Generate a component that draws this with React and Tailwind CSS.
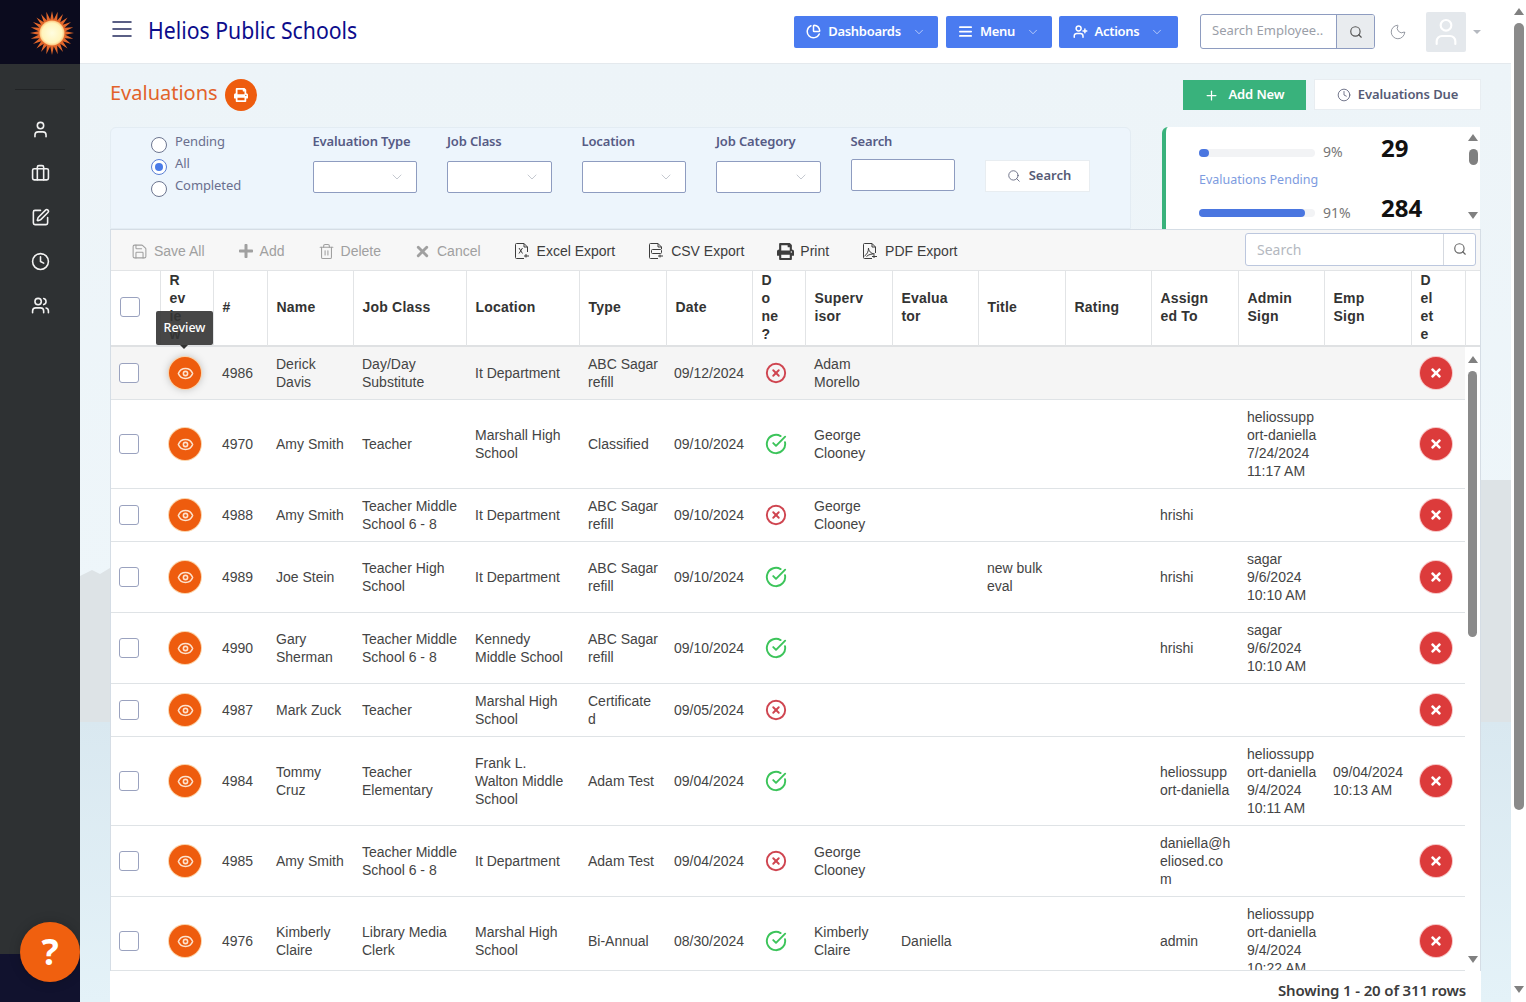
import React from 'react';
import {
  AlignJustify, Briefcase, ChartPie, ChevronDown, CircleCheckBig, CircleX, Clock, Eye, Menu, Moon, Plus,
  Save, Search, SquarePen, Trash2, User, UserPlus, Users, X,
} from 'lucide-react';
import { FaPlus, FaPrint, FaTimes } from 'react-icons/fa';

const noto = "font-['Noto_Sans',sans-serif]";

const columns = [49, 53, 54, 86, 113, 113, 87, 86, 53, 87, 86, 87, 86, 87, 86, 87, 54];

const headers = [
  [], ['R', 'ev', 'ie', 'w'], ['#'], ['Name'], ['Job Class'], ['Location'], ['Type'], ['Date'],
  ['D', 'o', 'ne', '?'], ['Superv', 'isor'], ['Evalua', 'tor'], ['Title'], ['Rating'],
  ['Assign', 'ed To'], ['Admin', 'Sign'], ['Emp', 'Sign'], ['D', 'el', 'et', 'e'],
];

const rows = [
  { id: 4986, name: 'Derick Davis', job: 'Day/Day Substitute', loc: 'It Department', type: 'ABC Sagar refill', date: '09/12/2024', done: false, sup: 'Adam Morello' },
  { id: 4970, name: 'Amy Smith', job: 'Teacher', loc: 'Marshall High School', type: 'Classified', date: '09/10/2024', done: true, sup: 'George Clooney', admin: 'heliossupport-daniella 7/24/2024 11:17 AM' },
  { id: 4988, name: 'Amy Smith', job: 'Teacher Middle School 6 - 8', loc: 'It Department', type: 'ABC Sagar refill', date: '09/10/2024', done: false, sup: 'George Clooney', assigned: 'hrishi' },
  { id: 4989, name: 'Joe Stein', job: 'Teacher High School', loc: 'It Department', type: 'ABC Sagar refill', date: '09/10/2024', done: true, title: 'new bulk eval', assigned: 'hrishi', admin: 'sagar 9/6/2024 10:10 AM' },
  { id: 4990, name: 'Gary Sherman', job: 'Teacher Middle School 6 - 8', loc: 'Kennedy Middle School', type: 'ABC Sagar refill', date: '09/10/2024', done: true, assigned: 'hrishi', admin: 'sagar 9/6/2024 10:10 AM' },
  { id: 4987, name: 'Mark Zuck', job: 'Teacher', loc: 'Marshal High School', type: 'Certificated', date: '09/05/2024', done: false },
  { id: 4984, name: 'Tommy Cruz', job: 'Teacher Elementary', loc: 'Frank L. Walton Middle School', type: 'Adam Test', date: '09/04/2024', done: true, assigned: 'heliossupport-daniella', admin: 'heliossupport-daniella 9/4/2024 10:11 AM', emp: '09/04/2024 10:13 AM' },
  { id: 4985, name: 'Amy Smith', job: 'Teacher Middle School 6 - 8', loc: 'It Department', type: 'Adam Test', date: '09/04/2024', done: false, sup: 'George Clooney', assigned: 'daniella@heliosed.com' },
  { id: 4976, name: 'Kimberly Claire', job: 'Library Media Clerk', loc: 'Marshal High School', type: 'Bi-Annual', date: '08/30/2024', done: true, sup: 'Kimberly Claire', evaluator: 'Daniella', assigned: 'admin', admin: 'heliossupport-daniella 9/4/2024 10:22 AM' },
];

// the burst in the corner of the sidebar
const sunPoints = Array.from({ length: 48 }, (_, i) => {
  const r = i % 2 === 0 ? 22 : 13.5;
  const a = (i * Math.PI) / 24;
  return `${24 + r * Math.sin(a)},${24 - r * Math.cos(a)}`;
}).join(' ');

const SunLogo = () => (
  <svg width="48" height="48" viewBox="0 0 48 48">
    <defs>
      <radialGradient id="sunCore">
        <stop offset="0" stopColor="#fffde0" />
        <stop offset="0.8" stopColor="#fff4bc" />
        <stop offset="1" stopColor="#fcc27a" />
      </radialGradient>
    </defs>
    <polygon points={sunPoints} fill="#e2672b" />
    <circle cx="24" cy="24" r="12.5" fill="url(#sunCore)" />
  </svg>
);

const ExcelIcon = () => (
  <svg width="17" height="18" viewBox="0 0 17 18" fill="none" stroke="#3d3d3d" strokeWidth="1">
    <path d="M10 16.500H2.500a1 1 0 0 1-1-1v-13a1 1 0 0 1 1-1H10l3.500 3.500V10" />
    <path d="M10 1.500V5h3.500M5 6l3.500 5.500M8.500 6 5 11.500M12 12v3.500m-2-1.500h5" />
  </svg>
);

const CsvIcon = () => (
  <svg width="17" height="18" viewBox="0 0 17 18" fill="none" stroke="#3d3d3d" strokeWidth="1">
    <path d="M10 16.500H2.500a1 1 0 0 1-1-1v-13a1 1 0 0 1 1-1H10l3.500 3.500V7" />
    <path d="M10 1.500V5h3.500M12 12.500v3m-2-1.500h5" />
    <rect x="3.500" y="7.500" width="10" height="4" rx="1" />
  </svg>
);

const PdfIcon = () => (
  <svg width="17" height="18" viewBox="0 0 17 18" fill="none" stroke="#3d3d3d" strokeWidth="1">
    <path d="M10 16.500H2.500a1 1 0 0 1-1-1v-13a1 1 0 0 1 1-1H10l3.500 3.500V11" />
    <path d="M10 1.500V5h3.500M2.500 14c2.500-1.500 4-4.500 4-8 0 3 2.500 5.500 6 6-3-.2-6 .5-8 2.500M12 13v3m-2-1.500h5" />
  </svg>
);

const TriangleUp = () => (
  <span className="block w-0 h-0 border-x-[5px] border-b-[7px] border-x-transparent border-b-[#808080]" />
);

const TriangleDown = () => (
  <span className="block w-0 h-0 border-x-[5px] border-t-[7px] border-x-transparent border-t-[#808080]" />
);

const NavButton = ({ icon: Icon, label, width, stroke = 2.4, extra = '' }) => (
  <button className={`flex items-center justify-center gap-[7px] h-8 rounded-[2px] bg-[#4a7bf0] text-white text-[13px] font-semibold tracking-[-0.3px] ${width} ${extra}`}>
    <Icon size={15} strokeWidth={stroke} />
    <span>{label}</span>
    <ChevronDown size={14} strokeWidth={1} className="ml-1" />
  </button>
);

const SelectFilter = ({ label }) => (
  <div className="w-[104.500px]">
    <div className="text-[13px] leading-[16px] font-semibold tracking-[-0.15px] text-[#565b85]">{label}</div>
    <div className="mt-3 h-8 flex items-center justify-end pr-[11px] bg-white border border-[#8e9cc0] rounded-[2px]">
      <ChevronDown size={16} strokeWidth={1} className="text-[#a8adb8]" />
    </div>
  </div>
);

const Radio = ({ label, checked }) => (
  <div className="flex items-start gap-2 h-[22px]">
    <span className={`mt-[3px] w-4 h-4 rounded-full border bg-white flex items-center justify-center ${checked ? 'border-[#5b7fd4]' : 'border-[#6d7690]'}`}>
      {checked && <span className="w-2 h-2 rounded-full bg-[#4a7be8]" />}
    </span>
    <span className="text-[13px] leading-[15px] tracking-[-0.1px] text-[#6a6f8e]">{label}</span>
  </div>
);

const ToolItem = ({ icon, label, muted }) => (
  <div className={`mt-[2px] flex items-center gap-1.5 ${muted ? 'text-[#a0a0a0]' : 'text-[#3d3d3d]'}`}>
    {icon}
    <span>{label}</span>
  </div>
);

const Checkbox = () => <span className="block w-5 h-5 bg-white border border-[#9aa2bf] rounded-[3px]" />;

const Cell = ({ children }) => (
  <td className="pl-[9px] pr-[7.500px] py-2 break-words align-middle">{children}</td>
);

const Colgroup = () => (
  <colgroup>
    {columns.map((w, i) => (
      <col key={i} style={{ width: w }} />
    ))}
  </colgroup>
);

const App = () => {
  return (
    <div className={`flex w-[1526px] h-[1002px] overflow-hidden bg-white ${noto}`}>
      {/* Sidebar */}
      <aside className="relative w-20 shrink-0 flex flex-col bg-[#2e3133] text-[#f2f2f2]">
        <div className="h-16 bg-[#0b0b1e] flex items-center justify-end pr-[4px] pt-px">
          <SunLogo />
        </div>
        <div className="mx-[15px] mt-[25px] border-t border-[#212325]" />
        <nav className="mt-[30px] flex flex-col items-center gap-[25px]">
          <User size={19} strokeWidth={2} />
          <Briefcase size={19} strokeWidth={2} />
          <SquarePen size={19} strokeWidth={2} />
          <Clock size={19} strokeWidth={2} />
          <Users size={19} strokeWidth={2} />
        </nav>
        <div className="mt-auto h-12 bg-[#11122e]" />
        <button className="absolute left-5 top-[922px] w-[60px] h-[60px] rounded-full bg-[#f0600f] text-white text-[36px] font-bold flex items-center justify-center shadow-[0_0_12px_rgba(0,0,0,0.2)]">
          ?
        </button>
      </aside>

      <div className="flex-1 min-w-0 flex flex-col">
        {/* Top bar */}
        <header className="h-16 shrink-0 flex items-center bg-white border-b border-[#e4e9ed] pl-[30px] pr-[30px]">
          <Menu size={24} strokeWidth={1.8} className="mb-[6px] text-[#5a5f85] scale-x-110" />
          <h1 className="mb-[4px] ml-[14px] text-[24px] text-[#0c0c8c] leading-none whitespace-nowrap origin-left scale-x-[0.885]">Helios Public Schools</h1>
          <div className="ml-auto flex items-center gap-2 mr-[22px]">
            <NavButton icon={ChartPie} label="Dashboards" width="w-[144px]" />
            <NavButton icon={AlignJustify} label="Menu" width="w-[106px]" stroke={2.8} />
            <NavButton icon={UserPlus} label="Actions" width="w-[119px]" extra="-ml-px" />
          </div>
          <div className="flex w-[175px] h-[35px] border border-[#8e9cc0] rounded-[3px] overflow-hidden">
            <span className="flex-1 pl-[11px] text-[13px] leading-[31px] whitespace-nowrap overflow-hidden text-[#9a9ea8]">Search Employee..</span>
            <span className="w-[38px] shrink-0 flex items-center justify-center bg-[#e9ecef] border-l border-[#8e9cc0]">
              <Search size={14} className="text-[#555]" />
            </span>
          </div>
          <Moon size={18} strokeWidth={1.2} className="ml-[14px] text-[#8a8f98]" />
          <div className="ml-[19px] w-10 h-10 bg-[#e4e8ec] rounded-[2px] flex items-center justify-center">
            <User size={32} strokeWidth={1.6} className="text-white" />
          </div>
          <span className="ml-[7px] w-0 h-0 border-x-[4px] border-t-[4px] border-x-transparent border-t-[#b5b9c0]" />
        </header>

        {/* Page body */}
        <main className="relative flex-1 min-h-0 flex flex-col pl-[30px] pr-[30px] bg-[linear-gradient(#edf4f8,#eef6fa_60%,#d9e8f0_70%,#e4f2f8)]">
          <svg className="absolute inset-0 w-full h-full" viewBox="0 0 1431 938" preserveAspectRatio="none">
            <path d="M0 512 L12 506 L20 510 L30 504 L1400 416 L1431 416 L1431 658 L0 658 Z" fill="#dde3e6" />
          </svg>

          <div className="relative flex items-start h-[63px] pt-[15px]">
            <h2 className="text-[20px] leading-[27px] text-[#e2622a]">Evaluations</h2>
            <span className="ml-[7px] w-8 h-8 rounded-full bg-[#ee5c0e] flex items-center justify-center text-white">
              <FaPrint size={14} />
            </span>
            <button className="ml-auto mt-px w-[123px] h-[30px] flex items-center justify-center gap-[9px] bg-[#39b27c] text-white text-[13px] font-semibold tracking-[-0.1px]">
              <Plus size={15} strokeWidth={2} />
              Add New
            </button>
            <button className="ml-2 w-[167px] h-[31px] flex items-center justify-center gap-[7px] bg-white border border-[#e8edf1] text-[#565b75] text-[13px] font-semibold tracking-[-0.1px]">
              <Clock size={14} strokeWidth={1.4} />
              Evaluations Due
            </button>
          </div>

          <div className="relative flex items-stretch h-[102px]">
            {/* Filters */}
            <section className="w-[1021px] flex items-start pl-[40px] pt-[5px] bg-[#edf5fc] border border-[#e3ecf3] rounded-t-md">
              <div className="w-[161.500px] pt-px">
                <Radio label="Pending" />
                <Radio label="All" checked />
                <Radio label="Completed" />
              </div>
              <div className="flex items-start gap-[30px]">
                <SelectFilter label="Evaluation Type" />
                <SelectFilter label="Job Class" />
                <SelectFilter label="Location" />
                <SelectFilter label="Job Category" />
                <div className="w-[104px]">
                  <div className="text-[13px] leading-[16px] font-semibold tracking-[-0.15px] text-[#565b85]">Search</div>
                  <div className="mt-[10px] h-8 bg-white border border-[#8e9cc0] rounded-[2px]" />
                </div>
                <button className="mt-[27px] w-[105px] h-8 flex items-center justify-center gap-2 pl-1 bg-white border border-[#e8edf1] text-[13px] font-semibold text-[#565b75]">
                  <Search size={14} strokeWidth={1.4} />
                  Search
                </button>
              </div>
            </section>

            {/* Stats */}
            <section className="ml-[31px] w-[318px] flex">
              <div className="flex-1 h-full overflow-hidden bg-white border-l-[4px] border-[#39b27c] rounded-tl-md pl-[33px] pt-[4px]">
                <div className="flex items-center h-[34px]">
                  <div className="mt-[10px] w-[116px] h-2 rounded-full bg-[#f2f3f5]">
                    <div className="h-full rounded-full bg-[#4a76e0]" style={{ width: '9%' }} />
                  </div>
                  <span className="mt-[6px] ml-2 w-[58px] text-[14px] text-[#777]">9%</span>
                  <span className="text-[24px] font-bold text-[#111]">29</span>
                </div>
                <div className="mt-[4px] h-[22px] text-[12.500px] leading-[22px] text-[#7d9be0]">Evaluations Pending</div>
                <div className="flex items-center h-[34px]">
                  <div className="mt-[10px] w-[116px] h-2 rounded-full bg-[#f2f3f5]">
                    <div className="h-full rounded-full bg-[#4a76e0]" style={{ width: '91%' }} />
                  </div>
                  <span className="mt-[8px] ml-2 w-[58px] text-[14px] text-[#777]">91%</span>
                  <span className="text-[24px] font-bold text-[#111]">284</span>
                </div>
              </div>
              <div className="w-[14px] bg-white flex flex-col items-center pt-[7px] pb-[10px]">
                <TriangleUp />
                <span className="mt-[8px] w-[9px] h-4 rounded-full bg-[#808080]" />
                <span className="mt-auto"><TriangleDown /></span>
              </div>
            </section>
          </div>

          {/* Grid panel */}
          <section className="relative flex-1 min-h-0 flex flex-col bg-white border-x border-t border-[#d5dde5] font-['Liberation_Sans',Arial,sans-serif] text-[14px] leading-[18px] text-[#444]">
            <div className="h-[41px] shrink-0 flex items-center pl-5 pr-[4px] gap-[33px] bg-[#f7f7f7] border-b border-[#e2e4e6]">
              <ToolItem muted icon={<Save size={17} strokeWidth={1.5} />} label="Save All" />
              <ToolItem muted icon={<FaPlus size={16} />} label="Add" />
              <ToolItem muted icon={<Trash2 size={17} strokeWidth={1.5} />} label="Delete" />
              <ToolItem muted icon={<X size={17} strokeWidth={4} />} label="Cancel" />
              <ToolItem icon={<ExcelIcon />} label="Excel Export" />
              <ToolItem icon={<CsvIcon />} label="CSV Export" />
              <ToolItem icon={<FaPrint size={17} />} label="Print" />
              <ToolItem icon={<PdfIcon />} label="PDF Export" />
              <div className={`ml-auto mb-[2px] flex w-[231px] h-[33px] bg-white border border-[#bcc7de] rounded-[3px] ${noto}`}>
                <span className="flex-1 pl-[11px] text-[14px] leading-[31px] text-[#b4b8c0]">Search</span>
                <span className="w-[32px] flex items-center justify-center border-l border-[#d5d9e0]">
                  <Search size={14} className="text-[#666]" />
                </span>
              </div>
            </div>

            {/* Column headers */}
            <div className="shrink-0 flex h-[76px] border-b-2 border-[#dfe1e3]">
              <table className="table-fixed w-[1354px] h-full">
                <Colgroup />
                <thead>
                  <tr>
                    {headers.map((lines, i) => (
                      <th key={i} className="pl-[9px] pr-0 pb-[3px] text-left font-bold text-[#333] border-r border-[#e2e4e6] tracking-[0.2px]">
                        {i === 0 ? <Checkbox /> : lines.map((l) => <div key={l}>{l}</div>)}
                      </th>
                    ))}
                  </tr>
                </thead>
              </table>
            </div>

            {/* Rows */}
            <div className="flex-1 min-h-0 flex">
              <div className="w-[1354px] shrink-0 overflow-hidden border-b border-[#dfe3e6]">
                <table className="table-fixed w-[1354px]">
                  <Colgroup />
                  <tbody>
                    {rows.map((row, i) => (
                      <tr key={row.id} className={`border-b border-[#dfe3e6] ${i === 0 ? 'bg-[#f5f5f5]' : ''}`}>
                        <td className="pl-2"><Checkbox /></td>
                        <td className="pl-[9px]">
                          <span className={`w-8 h-8 rounded-full bg-[#ee5c0e] ring-1 ring-[#fbd2a8] flex items-center justify-center text-[#fde3cf] ${i === 0 ? 'shadow-[0_0_8px_rgba(0,0,0,0.25)]' : ''}`}>
                            <Eye size={17} strokeWidth={2.2} />
                          </span>
                        </td>
                        <Cell>{row.id}</Cell>
                        <Cell>{row.name}</Cell>
                        <Cell>{row.job}</Cell>
                        <Cell>{row.loc}</Cell>
                        <Cell>{row.type}</Cell>
                        <td className="pl-2 whitespace-nowrap">{row.date}</td>
                        <td className="pl-[13px]">
                          {row.done
                            ? <CircleCheckBig size={22} strokeWidth={2.1} className="text-[#3cc45a]" />
                            : <CircleX size={22} strokeWidth={2.1} className="text-[#cf4550]" />}
                        </td>
                        <Cell>{row.sup}</Cell>
                        <Cell>{row.evaluator}</Cell>
                        <Cell>{row.title}</Cell>
                        <Cell />
                        <Cell>{row.assigned}</Cell>
                        <Cell>{row.admin}</Cell>
                        <Cell>{row.emp}</Cell>
                        <td className="pl-[9px]">
                          <span className="w-8 h-8 rounded-full bg-[#dc3b3b] ring-1 ring-[#f7c5c5] flex items-center justify-center text-white">
                            <FaTimes size={14} />
                          </span>
                        </td>
                      </tr>
                    ))}
                  </tbody>
                </table>
              </div>
              <div className="w-[15px] flex flex-col items-center pt-[9px] pb-[8px] bg-white">
                <TriangleUp />
                <span className="mt-[8px] w-[9px] h-[266px] rounded-full bg-[#8a8a8a]" />
                <span className="mt-auto"><TriangleDown /></span>
              </div>
            </div>

            <div className={`h-[31px] shrink-0 flex items-center justify-end pt-[6px] pr-[15px] -mx-px bg-white text-[15px] font-semibold tracking-[-0.15px] text-[#3c3c3c] ${noto}`}>
              Showing 1 - 20 of 311 rows
            </div>

            {/* Tooltip on the hovered review button */}
            <div className={`absolute left-[45px] top-[81px] w-[57px] h-[34px] flex items-center justify-center bg-[#333]/90 rounded-[2px] text-white text-[12.500px] font-medium ${noto}`}>
              Review
              <span className="absolute left-[24px] -bottom-[4px] w-0 h-0 border-x-[4px] border-t-[4px] border-x-transparent border-t-[#333]" />
            </div>
          </section>
        </main>
      </div>

      {/* Page scrollbar */}
      <div className="w-[15px] shrink-0 flex flex-col items-center pt-[8px] pb-[9px] bg-white">
        <TriangleUp />
        <span className="mt-[8px] w-[10px] h-[787px] rounded-full bg-[#8a8a8a]" />
        <span className="mt-auto"><TriangleDown /></span>
      </div>
    </div>
  );
};

export default App;
